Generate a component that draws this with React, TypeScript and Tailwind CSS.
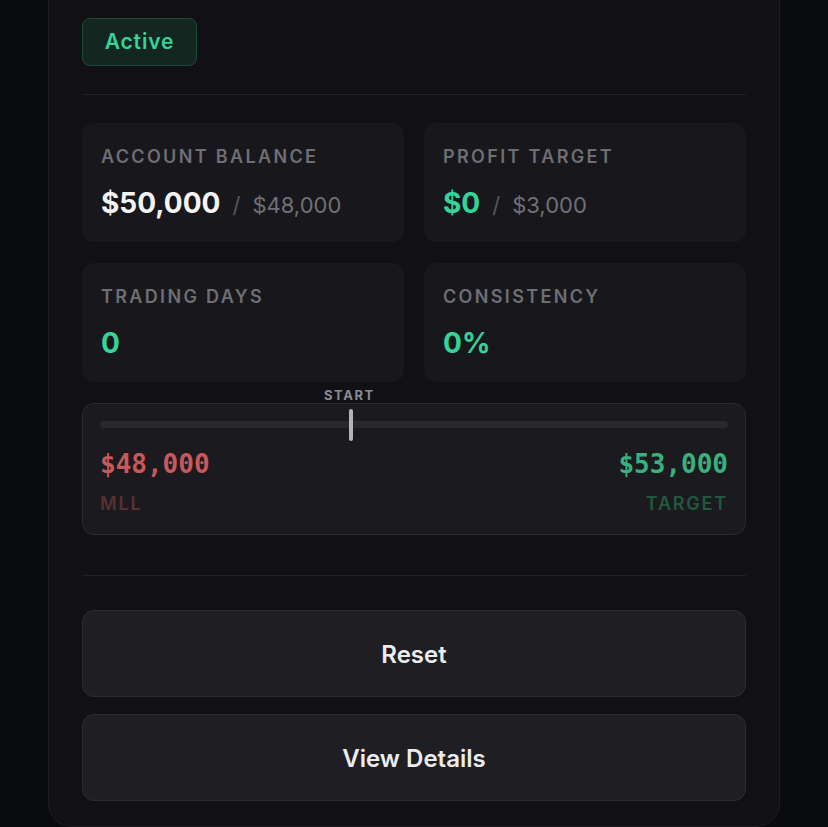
import React from "react";

function Stat({ label, children }: { label: string; children: React.ReactNode }) {
  return (
    <div className="h-[119px] rounded-[12px] bg-[#18181c] px-[19px] pt-[22px]">
      <div className="text-[18px] leading-[24px] font-semibold tracking-[0.13em] text-[#6e6e75]">{label}</div>
      <div className="mt-[16px] flex items-baseline leading-[36px]">{children}</div>
    </div>
  );
}

export default function App() {
  return (
    <div
      className="min-h-[827px] w-full bg-[#0a0b0e] overflow-hidden"
      style={{ fontFamily: "Inter, 'Noto Sans', sans-serif" }}
    >
      <div className="mx-[48px] -mt-[30px] h-[857px] rounded-[24px] border border-[#1e1e23] bg-[#111115] px-[33px] pt-[47px]">
        <div className="inline-flex h-[48px] w-[115px] items-center justify-center rounded-[8px] border border-[#1f4a39] bg-[#13261f] text-[21px] font-semibold tracking-[0.04em] text-[#34d399]">
          Active
        </div>
        <div className="mt-[28px] h-px bg-[#1f1f24]" />
        <div className="mt-[28px] grid grid-cols-2 gap-x-[20px] gap-y-[21px]">
          <Stat label="ACCOUNT BALANCE">
            <span className="text-[28px] font-bold text-[#f4f4f6]">$50,000</span>
            <span className="ml-[12px] text-[22px] text-[#56565c]">/</span>
            <span className="ml-[12px] text-[22px] text-[#707077]">$48,000</span>
          </Stat>
          <Stat label="PROFIT TARGET">
            <span className="text-[28px] font-bold text-[#34d399]">$0</span>
            <span className="ml-[12px] text-[22px] text-[#56565c]">/</span>
            <span className="ml-[12px] text-[22px] text-[#707077]">$3,000</span>
          </Stat>
          <Stat label="TRADING DAYS">
            <span className="text-[28px] font-bold text-[#34d399]">0</span>
          </Stat>
          <Stat label="CONSISTENCY">
            <span className="text-[28px] font-bold text-[#34d399]">0%</span>
          </Stat>
        </div>
        <div className="relative mt-[21px] h-[132px] rounded-[12px] border border-[#2a2a2f] bg-[#1b1b1f] px-[17px] pt-[17px]">
          <div className="absolute left-[241px] top-[-18px] text-[13px] font-bold tracking-[0.12em] text-[#8b8b92]">START</div>
          <div className="relative h-[7px] rounded-full bg-[#28282d]">
            <div className="absolute left-[249px] top-[-12px] h-[32px] w-[4px] rounded-full bg-[#b4b4ba]" />
          </div>
          <div className="mt-[21px] flex justify-between" style={{ fontFamily: "'DejaVu Sans Mono', monospace" }}>
            <span className="text-[26px] font-bold leading-[30px] text-[#c8585a]">$48,000</span>
            <span className="text-[26px] font-bold leading-[30px] text-[#38b07f]">$53,000</span>
          </div>
          <div className="mt-[11px] flex justify-between text-[18px] font-semibold tracking-[0.1em]">
            <span className="text-[#5a2f33]">MLL</span>
            <span className="text-[#22583f]">TARGET</span>
          </div>
        </div>
        <div className="mt-[40px] h-px bg-[#1f1f24]" />
        <div className="mt-[34px] flex flex-col gap-[17px]">
          <button className="h-[87px] w-full rounded-[12px] border border-[#2b2b30] bg-[#1f1f23] pt-[2px] text-[24px] font-semibold text-[#ececef]">
            Reset
          </button>
          <button className="h-[87px] w-full rounded-[12px] border border-[#2b2b30] bg-[#1f1f23] pt-[2px] text-[24px] font-semibold text-[#ececef]">
            View Details
          </button>
        </div>
      </div>
    </div>
  );
}
